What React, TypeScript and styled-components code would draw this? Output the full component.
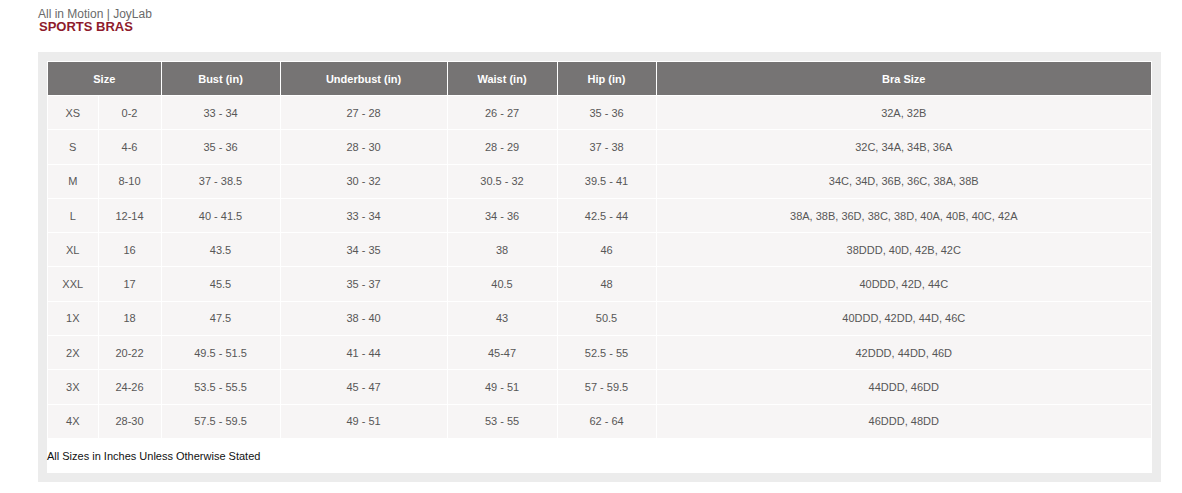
import styled, { createGlobalStyle } from "styled-components";

const GlobalStyle = createGlobalStyle`
  body {
    margin: 0;
    background: #ffffff;
    font-family: "Liberation Sans", Arial, sans-serif;
  }
`;

const rows = [
  ["XS", "0-2", "33 - 34", "27 - 28", "26 - 27", "35 - 36", "32A, 32B"],
  ["S", "4-6", "35 - 36", "28 - 30", "28 - 29", "37 - 38", "32C, 34A, 34B, 36A"],
  ["M", "8-10", "37 - 38.5", "30 - 32", "30.5 - 32", "39.5 - 41", "34C, 34D, 36B, 36C, 38A, 38B"],
  ["L", "12-14", "40 - 41.5", "33 - 34", "34 - 36", "42.5 - 44", "38A, 38B, 36D, 38C, 38D, 40A, 40B, 40C, 42A"],
  ["XL", "16", "43.5", "34 - 35", "38", "46", "38DDD, 40D, 42B, 42C"],
  ["XXL", "17", "45.5", "35 - 37", "40.5", "48", "40DDD, 42D, 44C"],
  ["1X", "18", "47.5", "38 - 40", "43", "50.5", "40DDD, 42DD, 44D, 46C"],
  ["2X", "20-22", "49.5 - 51.5", "41 - 44", "45-47", "52.5 - 55", "42DDD, 44DD, 46D"],
  ["3X", "24-26", "53.5 - 55.5", "45 - 47", "49 - 51", "57 - 59.5", "44DDD, 46DD"],
  ["4X", "28-30", "57.5 - 59.5", "49 - 51", "53 - 55", "62 - 64", "46DDD, 48DD"],
];

const widths = [50, 63, 119, 167, 110, 99, 495];

const Page = styled.div`
  padding: 8px 21px 0 38px;
`;

const Brand = styled.div`
  font-size: 12px;
  line-height: 12px;
  color: #6a6a6a;
`;

const Title = styled.div`
  font-size: 13px;
  line-height: 14px;
  font-weight: bold;
  color: #8e1b2c;
  margin-left: 1px;
`;

const Panel = styled.div`
  margin-top: 18px;
  width: 1105px;
  padding: 9px;
  background: #ececec;
`;

const Inner = styled.div`
  background: #ffffff;
  padding: 1px 1px 0 1px;
`;

const Table = styled.table`
  border-collapse: collapse;
  table-layout: fixed;
  width: 1103px;
  font-size: 11px;
`;

const Head = styled.th`
  background: #767474;
  color: #ffffff;
  font-weight: bold;
  height: 33px;
  padding: 0;
  text-align: center;
  border-left: 1px solid #ffffff;
  border-bottom: 1px solid #ffffff;
  &:first-child {
    border-left: none;
  }
`;

const Cell = styled.td`
  background: #f7f5f5;
  color: #575757;
  height: 33.3px;
  padding: 0;
  text-align: center;
  border: 1px solid #ffffff;
  &:first-child {
    border-left: none;
  }
  &:last-child {
    border-right: none;
  }
`;

const Note = styled.div`
  height: 34px;
  line-height: 34px;
  font-size: 11px;
  color: #111111;
  margin-left: -1px;
`;

export default function App() {
  return (
    <Page>
      <GlobalStyle />
      <Brand>All in Motion | JoyLab</Brand>
      <Title>SPORTS BRAS</Title>
      <Panel>
        <Inner>
          <Table>
            <colgroup>
              {widths.map((w, i) => (
                <col key={i} style={{ width: w }} />
              ))}
            </colgroup>
            <thead>
              <tr>
                <Head colSpan={2}>Size</Head>
                <Head>Bust (in)</Head>
                <Head>Underbust (in)</Head>
                <Head>Waist (in)</Head>
                <Head>Hip (in)</Head>
                <Head>Bra Size</Head>
              </tr>
            </thead>
            <tbody>
              {rows.map((r) => (
                <tr key={r[0]}>
                  {r.map((c, i) => (
                    <Cell key={i}>{c}</Cell>
                  ))}
                </tr>
              ))}
            </tbody>
          </Table>
          <Note>All Sizes in Inches Unless Otherwise Stated</Note>
        </Inner>
      </Panel>
    </Page>
  );
}
